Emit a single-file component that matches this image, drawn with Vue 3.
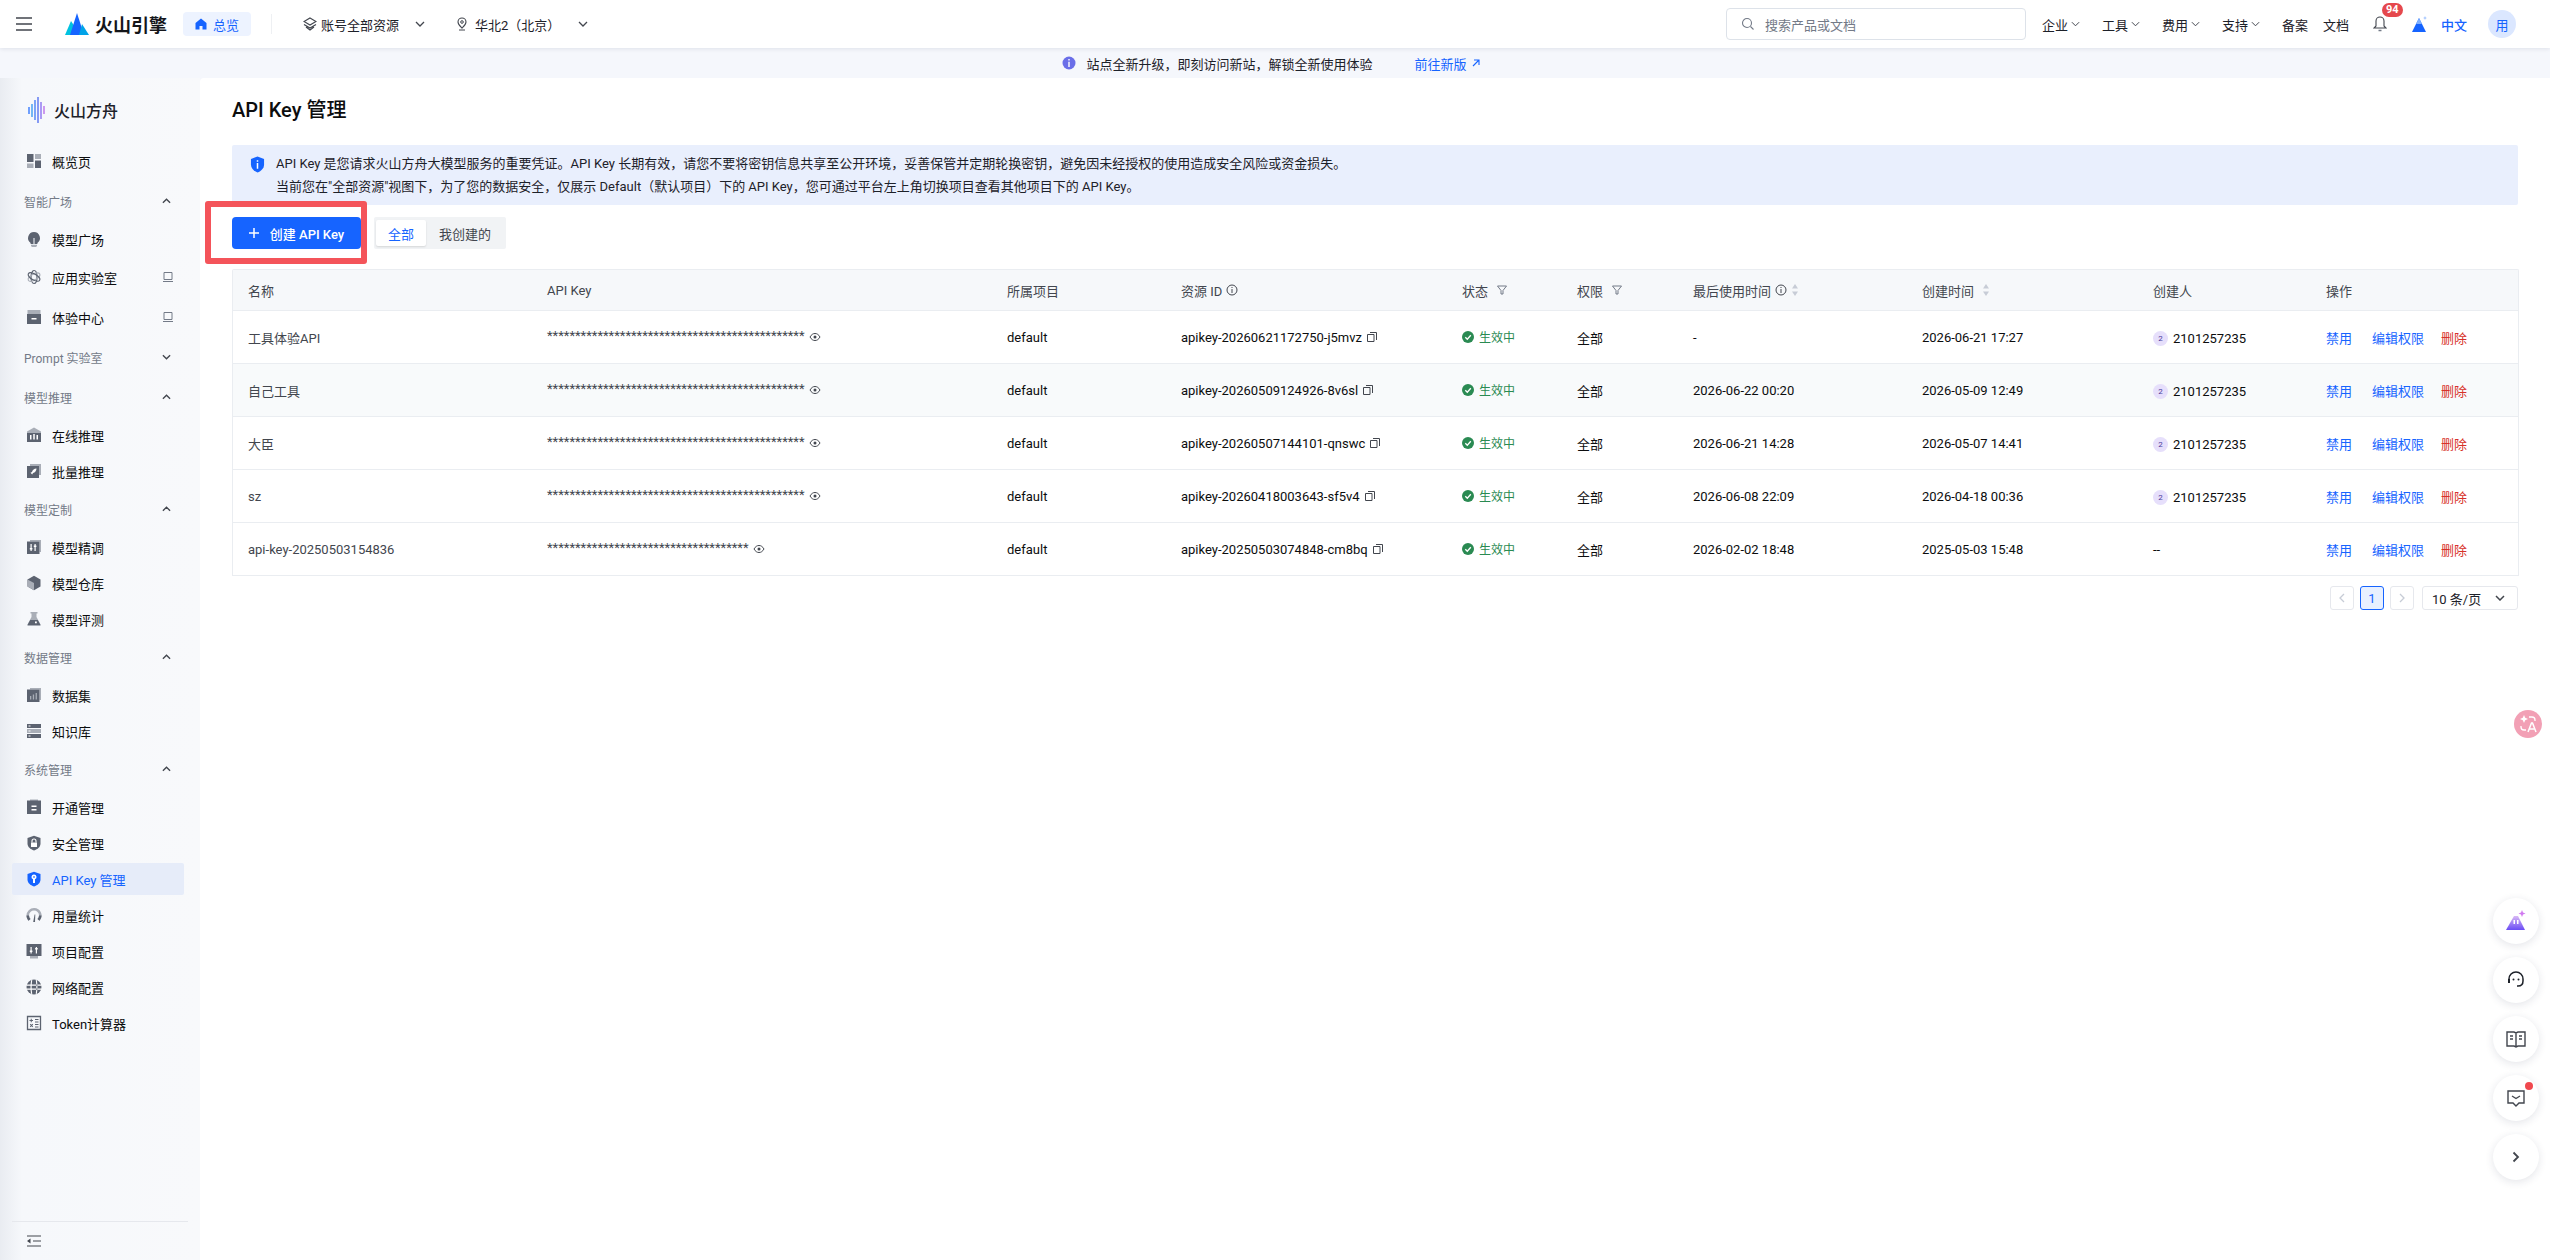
<script setup>
const D = "#5c6370";
const L = "#a9aeb7";
const W = "#ffffff";
const B = "#1664ff";

const icons = {
  overview: [
    { d: "M1 1h6.5v8H1z", fill: D },
    { d: "M9 1h6v5H9z", fill: L },
    { d: "M1 10.500h6.500V15H1z", fill: L },
    { d: "M9 7.500h6V15H9z", fill: D },
  ],
  bulb: [
    { d: "M8 1a6 6 0 0 0-3.400 10.900V13h6.800v-1.100A6 6 0 0 0 8 1z", fill: D },
    { d: "M5 13.800h6V15l-1 1H6l-1-1z", fill: L },
    { d: "M7 7h2v6H7z", fill: L },
  ],
  atom: [
    { d: "M8 1.500c1.700 0 3 2.900 3 6.500s-1.300 6.500-3 6.500S5 11.600 5 8s1.300-6.500 3-6.500z", fill: "none", stroke: D, "stroke-width": 1.2 },
    { d: "M8 1.500c1.700 0 3 2.900 3 6.500s-1.300 6.500-3 6.500S5 11.600 5 8s1.300-6.500 3-6.500z", fill: "none", stroke: L, "stroke-width": 1.2, transform: "rotate(60 8 8)" },
    { d: "M8 1.500c1.700 0 3 2.900 3 6.500s-1.300 6.500-3 6.500S5 11.600 5 8s1.300-6.500 3-6.500z", fill: "none", stroke: D, "stroke-width": 1.2, transform: "rotate(-60 8 8)" },
  ],
  box: [
    { d: "M1.500 1h13v4h-13z", fill: L },
    { d: "M1 5h14v10H1z", fill: D },
    { d: "M5.500 9h5v1.500h-5z", fill: W },
  ],
  bank: [
    { d: "M8 .500 1 4.500V15h14V4.500z", fill: L },
    { d: "M1 6h14v9H1z", fill: D },
    { d: "M4 8h1.500v4.500H4zM7.250 7h1.500v5.500h-1.500zM10.500 8H12v4.500h-1.500z", fill: W },
  ],
  rocket: [
    { d: "M4 1h11v11h-2V3H4z", fill: L },
    { d: "M1 3h12v12H1z", fill: D },
    { d: "M10.500 5.500c-2.200 0-4 1.500-4.500 3.500l-1.500.8 1.700 1.700.8-1.500c2-.5 3.500-2.300 3.500-4.500z", fill: W },
  ],
  tune: [
    { d: "M4 1h11v12h-1.500V2.500H4z", fill: L },
    { d: "M1 2.500h12.500V15H1z", fill: D },
    { d: "M4.500 5h1.200v7H4.500zM8.500 5h1.200v7H8.500z", fill: W },
    { d: "M3.800 9h2.600v1.500H3.800zM7.800 6.500h2.600V8H7.800z", fill: W },
  ],
  cube: [
    { d: "M8 .800 14.500 4.400v7.200L8 15.200 1.500 11.600V4.400z", fill: D },
    { d: "M1.500 4.400 8 8v7.200l-6.500-3.600z", fill: L },
  ],
  flask: [
    { d: "M4.500 1h7v1.500h-1V6l4 7.500V15h-13v-1.500l4-7.500V2.500h-1z", fill: L },
    { d: "M4.200 9h7.600l2.700 5H1.500z", fill: D },
    { d: "M9 10.500h1.800v1.800H9z", fill: W },
  ],
  dataset: [
    { d: "M4 1h11v12h-1.500V2.500H4z", fill: L },
    { d: "M1 2.500h12.500V15H1z", fill: D },
    { d: "M4 9h1.300v3.500H4zM6.800 7.500h1.300v5H6.800zM9.600 6h1.300v6.500H9.600z", fill: L },
  ],
  server: [
    { d: "M1 1h14v4H1z", fill: D },
    { d: "M1 6h14v4H1z", fill: L },
    { d: "M1 11h14v4H1z", fill: D },
    { d: "M2.500 2.500h2v1h-2zM2.500 7.500h2v1h-2zM2.500 12.500h2v1h-2z", fill: W },
  ],
  clip: [
    { d: "M4 .500h8V2H4z", fill: L },
    { d: "M1 1.500h14V15H1z", fill: D },
    { d: "M5.500 6.500h5V8h-5zM5.500 10h5v1.500h-5z", fill: W },
  ],
  shieldLock: [
    { d: "M8 .800 14.500 3v5.500c0 3.400-2.800 5.800-6.500 6.900-3.700-1.100-6.500-3.500-6.500-6.900V3z", fill: D },
    { d: "M5 7.500h6V12H5z", fill: W },
    { d: "M6 7.500V6a2 2 0 0 1 4 0v1.500", fill: "none", stroke: W, "stroke-width": 1.1 },
  ],
  shieldKey: [
    { d: "M8 .800 14.500 3v5.500c0 3.400-2.800 5.800-6.500 6.900-3.700-1.100-6.500-3.500-6.500-6.900V3z", fill: B },
    { d: "M8 3.500a2.500 2.500 0 0 1 1 4.800V12H7V8.300a2.500 2.500 0 0 1 1-4.800z", fill: W },
    { d: "M7.300 5.300h1.400v1.400H7.300z", fill: B },
  ],
  gauge: [
    { d: "M8 1a7.500 7.500 0 0 0-7.500 7.500c0 2 .8 3.900 2 5.200l2-1.700A5 5 0 0 1 3 8.500a5 5 0 0 1 10 0c0 1.300-.5 2.500-1.500 3.500l2 1.700a7.500 7.500 0 0 0-5.500-12.700z", fill: L },
    { d: "M.500 8.500c0 2 .8 3.900 2 5.200l2-1.700A5 5 0 0 1 3 8.500zM15.500 8.500c0 2-.8 3.900-2 5.200l-2-1.700A5 5 0 0 0 13 8.500z", fill: D },
    { d: "M7.200 15 8.600 7.500h.7L9 15z", fill: D },
  ],
  monitor: [
    { d: "M4 13h8v2.500H4z", fill: L },
    { d: "M.500 1h15v12H.500z", fill: D },
    { d: "M4.500 4h1.200v6.500H4.500zM9.800 4H11v6.500H9.800zM3.800 7.500h2.600V9H3.800zM9.100 5h2.600v1.500H9.100z", fill: W },
  ],
  globe: [
    { d: "M8 .500a7.500 7.500 0 1 0 0 15 7.500 7.500 0 0 0 0-15z", fill: D },
    { d: "M.500 5.500h15v1.200H.500zM.500 9.500h15v1.200H.500zM5.200 1 6.300 1.300C5.500 4.500 5.500 11.500 6.300 14.700L5.200 15C4.300 11.500 4.300 4.500 5.200 1zM10.800 1 9.700 1.300c.8 3.200.8 10.200 0 13.400l1.100.3c.9-3.500.9-10.500 0-14z", fill: W },
  ],
  calc: [
    { d: "M1.500 1.500h13v13h-13z", fill: "none", stroke: D, "stroke-width": 1.300 },
    { d: "M3.500 5h3.500v1H3.500zM4.750 3.750h1v3.500h-1zM9 4h3.500v1H9zM9 6.500h3.500v1H9zM9 9h3.500v1H9zM9 11.500h3.500v1H9z", fill: D },
    { d: "M3.800 9.500l.7-.7 2.700 2.700-.7.700zM3.800 11.500l2.700-2.700.7.700-2.700 2.700z", fill: D },
  ],
};

const nav = [
  { label: "概览页", icon: "overview", tall: true },
  { group: "智能广场", open: true },
  { label: "模型广场", icon: "bulb" },
  { label: "应用实验室", icon: "atom", tall: true, laptop: true },
  { label: "体验中心", icon: "box", tall: true, laptop: true },
  { group: "Prompt 实验室", open: false },
  { group: "模型推理", open: true },
  { label: "在线推理", icon: "bank" },
  { label: "批量推理", icon: "rocket" },
  { group: "模型定制", open: true },
  { label: "模型精调", icon: "tune" },
  { label: "模型仓库", icon: "cube" },
  { label: "模型评测", icon: "flask" },
  { group: "数据管理", open: true },
  { label: "数据集", icon: "dataset" },
  { label: "知识库", icon: "server" },
  { group: "系统管理", open: true },
  { label: "开通管理", icon: "clip" },
  { label: "安全管理", icon: "shieldLock" },
  { label: "API Key 管理", icon: "shieldKey", active: true },
  { label: "用量统计", icon: "gauge" },
  { label: "项目配置", icon: "monitor" },
  { label: "网络配置", icon: "globe" },
  { label: "Token计算器", icon: "calc" },
];

const topMenus = ["企业", "工具", "费用", "支持"];

const longKey = "*".repeat(46);
const shortKey = "*".repeat(36);

const rows = [
  { name: "工具体验API", key: longKey, id: "apikey-20260621172750-j5mvz", last: "-", created: "2026-06-21 17:27", user: "2101257235" },
  { name: "自己工具", key: longKey, id: "apikey-20260509124926-8v6sl", last: "2026-06-22 00:20", created: "2026-05-09 12:49", user: "2101257235", tint: true },
  { name: "大臣", key: longKey, id: "apikey-20260507144101-qnswc", last: "2026-06-21 14:28", created: "2026-05-07 14:41", user: "2101257235" },
  { name: "sz", key: longKey, id: "apikey-20260418003643-sf5v4", last: "2026-06-08 22:09", created: "2026-04-18 00:36", user: "2101257235" },
  { name: "api-key-20250503154836", key: shortKey, id: "apikey-20250503074848-cm8bq", last: "2026-02-02 18:48", created: "2025-05-03 15:48", user: "" },
];
</script>

<template>
  <div class="page">
    <header class="topbar">
      <svg class="burger" viewBox="0 0 16 14" width="16" height="14">
        <path d="M0 1h16M0 7h16M0 13h16" stroke="#42464e" stroke-width="1.500" fill="none" />
      </svg>
      <div class="brand">
        <svg viewBox="0 0 24 22" width="24" height="22">
          <path d="M0 22 6 8l4 6 2 8z" fill="#00c2e0" />
          <path d="M5 22 12 0l7 22z" fill="#1664ff" />
          <path d="M14 22l3-11 7 11z" fill="#00a3e8" />
        </svg>
        <span class="brand-name">火山引擎</span>
      </div>
      <div class="home-pill">
        <svg viewBox="0 0 12 12" width="12" height="12">
          <path d="M6 .500 11.500 5v6.500H7.500V8h-3v3.500H.500V5z" fill="#1664ff" />
        </svg>
        <span>总览</span>
      </div>
      <span class="top-divider"></span>
      <div class="scope scope-account">
        <svg viewBox="0 0 14 14" width="14" height="14">
          <path d="M7 1 13 4.500 7 8 1 4.500z" fill="none" stroke="#42464e" stroke-width="1.200" />
          <path d="M1 7.500 7 11l6-3.500M3 10l4 3 4-3" fill="none" stroke="#42464e" stroke-width="1.200" />
        </svg>
        <span>账号全部资源</span>
        <svg class="chev-wide" viewBox="0 0 10 6" width="10" height="6"><path d="M1 1l4 4 4-4" fill="none" stroke="#42464e" stroke-width="1.300" /></svg>
      </div>
      <div class="scope scope-region">
        <svg viewBox="0 0 10 14" width="10" height="14">
          <path d="M5 1a4 4 0 0 1 4 4c0 2.500-2.500 4.500-4 6-1.500-1.500-4-3.500-4-6a4 4 0 0 1 4-4z" fill="none" stroke="#42464e" stroke-width="1.100" />
          <circle cx="5" cy="5" r="1.300" fill="none" stroke="#42464e" />
          <path d="M2 13h6" stroke="#42464e" />
        </svg>
        <span>华北2（北京）</span>
        <svg class="chev-wide" viewBox="0 0 10 6" width="10" height="6"><path d="M1 1l4 4 4-4" fill="none" stroke="#42464e" stroke-width="1.300" /></svg>
      </div>

      <div class="top-right">
        <div class="search">
          <svg viewBox="0 0 14 14" width="14" height="14">
            <circle cx="6" cy="6" r="4.500" fill="none" stroke="#737a87" stroke-width="1.100" />
            <path d="M9.500 9.500l3 3" stroke="#737a87" stroke-width="1.100" />
          </svg>
          <span>搜索产品或文档</span>
        </div>
        <div v-for="m in topMenus" :key="m" class="top-menu">
          <span>{{ m }}</span>
          <svg viewBox="0 0 10 6" width="9" height="6"><path d="M1 1l4 4 4-4" fill="none" stroke="#42464e" stroke-width="1.100" /></svg>
        </div>
        <span class="top-plain">备案</span>
        <span class="top-plain doc">文档</span>
        <div class="bell">
          <svg viewBox="0 0 14 16" width="14" height="16">
            <path d="M7 1a4 4 0 0 1 4 4v5l2 2H1l2-2V5a4 4 0 0 1 4-4z" fill="none" stroke="#42464e" stroke-width="1.100" />
            <path d="M5.500 14.500h3" stroke="#737a87" stroke-width="1.500" />
          </svg>
          <span class="badge">94</span>
        </div>
        <svg class="peak" viewBox="0 0 18 18" width="18" height="18">
          <path d="M1 17 8 3l7 14z" fill="#1664ff" />
          <path d="M8 3l3 6H5z" fill="#7fb0ff" />
          <path d="M14 1l.6 1.400L16 3l-1.400.6L14 5l-.6-1.400L12 3l1.400-.6z" fill="#9cc0ff" />
        </svg>
        <span class="lang">中文</span>
        <span class="avatar">用</span>
      </div>
    </header>

    <div class="banner">
      <svg viewBox="0 0 14 14" width="14" height="14">
        <circle cx="7" cy="7" r="6.500" fill="#6a6ee8" />
        <path d="M6.300 3h1.400v1.400H6.300zM6.300 5.800h1.400V11H6.300z" fill="#fff" />
      </svg>
      <span class="banner-text">站点全新升级，即刻访问新站，解锁全新使用体验</span>
      <span class="banner-link">前往新版</span>
      <svg viewBox="0 0 10 10" width="10" height="10">
        <path d="M2 8l6-6M3 2h5v5" fill="none" stroke="#1664ff" stroke-width="1.100" />
      </svg>
    </div>

    <div class="body">
      <aside class="sidebar">
        <div class="ark">
          <svg viewBox="0 0 18 26" width="18" height="26">
            <path d="M1 10v7" stroke="#1664ff" stroke-width="1.200" />
            <path d="M4 7v13" stroke="#1c8cf0" stroke-width="1.200" />
            <path d="M7 3v20" stroke="#2a6cf5" stroke-width="1.200" />
            <path d="M10 0v26" stroke="#3b5cf0" stroke-width="1.200" />
            <path d="M13 5v17" stroke="#7a5cf0" stroke-width="1.200" />
            <path d="M16 9v8" stroke="#b05ae8" stroke-width="1.200" />
          </svg>
          <span>火山方舟</span>
        </div>

        <nav class="nav">
          <template v-for="n in nav" :key="n.label || n.group">
            <div v-if="n.group" class="nav-group">
              <span>{{ n.group }}</span>
              <svg viewBox="0 0 10 6" width="9" height="6">
                <path :d="n.open ? 'M1 5l4-4 4 4' : 'M1 1l4 4 4-4'" fill="none" stroke="#42464e" stroke-width="1.500" />
              </svg>
            </div>
            <div v-else class="nav-item" :class="{ tall: n.tall, active: n.active }">
              <svg viewBox="0 0 16 16" width="16" height="16">
                <path v-for="(p, i) in icons[n.icon]" :key="i" v-bind="p" />
              </svg>
              <span class="nav-label">{{ n.label }}</span>
              <svg v-if="n.laptop" class="laptop" viewBox="0 0 12 12" width="12" height="12">
                <path d="M2 1.500h8v7H2zM1 10.500h10" fill="none" stroke="#737a87" stroke-width="1" />
              </svg>
            </div>
          </template>
        </nav>

        <div class="side-foot">
          <svg viewBox="0 0 14 12" width="14" height="12">
            <path d="M0 1h14M6 6h8M0 11h14" stroke="#42464e" stroke-width="1.200" />
            <path d="M0 6l3.500-2.500v5z" fill="#42464e" />
          </svg>
        </div>
      </aside>

      <main class="content">
        <h1 class="title">API Key 管理</h1>

        <div class="alert">
          <svg viewBox="0 0 16 18" width="15" height="17">
            <path d="M8 .500 15 3v6c0 4-3 7-7 8.500C4 16 1 13 1 9V3z" fill="#1664ff" />
            <path d="M7.200 4.500h1.600v1.600H7.200zM7.200 7.500h1.600v6H7.200z" fill="#fff" />
          </svg>
          <div class="alert-text">
            <p>API Key 是您请求火山方舟大模型服务的重要凭证。API Key 长期有效，请您不要将密钥信息共享至公开环境，妥善保管并定期轮换密钥，避免因未经授权的使用造成安全风险或资金损失。</p>
            <p>当前您在"全部资源"视图下，为了您的数据安全，仅展示 Default（默认项目）下的 API Key，您可通过平台左上角切换项目查看其他项目下的 API Key。</p>
          </div>
        </div>

        <div class="tools">
          <div class="create-wrap">
            <button class="create">
              <svg viewBox="0 0 10 10" width="10" height="10"><path d="M5 0v10M0 5h10" stroke="#fff" stroke-width="1.500" /></svg>
              <span>创建 API Key</span>
            </button>
            <span class="mark"></span>
          </div>
          <div class="tabs">
            <span class="tab on">全部</span>
            <span class="tab">我创建的</span>
          </div>
        </div>

        <table class="grid">
          <colgroup>
            <col class="c-name" /><col class="c-key" /><col class="c-proj" /><col class="c-id" /><col class="c-state" />
            <col class="c-perm" /><col class="c-last" /><col class="c-made" /><col class="c-user" /><col class="c-op" />
          </colgroup>
          <thead>
            <tr>
              <th>名称</th>
              <th>API Key</th>
              <th>所属项目</th>
              <th>
                <span class="cell">资源 ID
                  <svg viewBox="0 0 12 12" width="12" height="12"><circle cx="6" cy="6" r="5" fill="none" stroke="#42464e" /><path d="M5.500 3h1v1h-1zM5.500 5h1v4h-1z" fill="#42464e" /></svg>
                </span>
              </th>
              <th>
                <span class="cell wide">状态
                  <svg viewBox="0 0 12 12" width="12" height="12"><path d="M1.500 2h9L7 6.500V10H5V6.500z" fill="none" stroke="#737a87" /></svg>
                </span>
              </th>
              <th>
                <span class="cell wide">权限
                  <svg viewBox="0 0 12 12" width="12" height="12"><path d="M1.500 2h9L7 6.500V10H5V6.500z" fill="none" stroke="#737a87" /></svg>
                </span>
              </th>
              <th>
                <span class="cell">最后使用时间
                  <svg viewBox="0 0 12 12" width="12" height="12"><circle cx="6" cy="6" r="5" fill="none" stroke="#42464e" /><path d="M5.500 3h1v1h-1zM5.500 5h1v4h-1z" fill="#42464e" /></svg>
                  <svg viewBox="0 0 8 14" width="8" height="14"><path d="M4 1 7 5.500H1zM4 13 1 8.500h6z" fill="#c7ccd6" /></svg>
                </span>
              </th>
              <th>
                <span class="cell wide">创建时间
                  <svg viewBox="0 0 8 14" width="8" height="14"><path d="M4 1 7 5.500H1zM4 13 1 8.500h6z" fill="#c7ccd6" /></svg>
                </span>
              </th>
              <th>创建人</th>
              <th>操作</th>
            </tr>
          </thead>
          <tbody>
            <tr v-for="r in rows" :key="r.id" :class="{ tint: r.tint }">
              <td class="muted">{{ r.name }}</td>
              <td>
                <span class="cell">
                  <span class="stars">{{ r.key }}</span>
                  <svg viewBox="0 0 12 12" width="12" height="12">
                    <path d="M1 6c1.500-2.500 3-3.500 5-3.500S9.500 3.500 11 6c-1.500 2.500-3 3.500-5 3.500S2.500 8.500 1 6z" fill="none" stroke="#42464e" />
                    <circle cx="6" cy="6" r="1.500" fill="#42464e" />
                  </svg>
                </span>
              </td>
              <td>default</td>
              <td>
                <span class="cell">{{ r.id }}
                  <svg viewBox="0 0 12 12" width="12" height="12">
                    <path d="M4 1.500h6.500V9" fill="none" stroke="#42464e" />
                    <path d="M1.500 3.500h6.500v7H1.500z" fill="none" stroke="#42464e" />
                  </svg>
                </span>
              </td>
              <td>
                <span class="state">
                  <svg viewBox="0 0 12 12" width="12" height="12">
                    <circle cx="6" cy="6" r="6" fill="#2a8a52" />
                    <path d="M3.300 6.200 5.300 8.200 8.800 4.300" fill="none" stroke="#fff" stroke-width="1.300" />
                  </svg>
                  生效中
                </span>
              </td>
              <td>全部</td>
              <td>{{ r.last }}</td>
              <td>{{ r.created }}</td>
              <td>
                <span v-if="r.user" class="cell"><span class="who">2</span>{{ r.user }}</span>
                <span v-else>--</span>
              </td>
              <td>
                <span class="ops">
                  <a>禁用</a>
                  <a>编辑权限</a>
                  <a class="danger">删除</a>
                </span>
              </td>
            </tr>
          </tbody>
        </table>

        <div class="pager">
          <span class="pg off">
            <svg viewBox="0 0 6 10" width="6" height="10"><path d="M5 1 1 5l4 4" fill="none" stroke="#c7ccd6" stroke-width="1.300" /></svg>
          </span>
          <span class="pg cur">1</span>
          <span class="pg off">
            <svg viewBox="0 0 6 10" width="6" height="10"><path d="M1 1l4 4-4 4" fill="none" stroke="#c7ccd6" stroke-width="1.300" /></svg>
          </span>
          <span class="size">
            10 条/页
            <svg viewBox="0 0 10 6" width="10" height="6"><path d="M1 1l4 4 4-4" fill="none" stroke="#42464e" stroke-width="1.500" /></svg>
          </span>
        </div>
      </main>
    </div>

    <div class="translate">
      <svg viewBox="0 0 20 20" width="20" height="20">
        <path d="M6 1l1.200 2.800L10 5 7.200 6.200 6 9 4.800 6.200 2 5l2.800-1.200z" fill="#fff" />
        <path d="M11 3h3a3 3 0 0 1 3 3v1M3 12v1a3 3 0 0 0 3 3h2" fill="none" stroke="#fff" stroke-width="1.300" />
        <path d="M10 18l3.500-9h1L18 18M11.300 15h5.400" fill="none" stroke="#fff" stroke-width="1.500" />
      </svg>
    </div>

    <div class="floats">
      <span class="fab">
        <svg viewBox="0 0 24 24" width="24" height="24">
          <defs>
            <linearGradient id="peakFill" x1="0" y1="0" x2="0" y2="1">
              <stop offset="0" stop-color="#d9b8f5" />
              <stop offset="1" stop-color="#6a4cf5" />
            </linearGradient>
          </defs>
          <path d="M2 21 10 7h4l7 14z" fill="url(#peakFill)" />
          <path d="M18 1l1 2.500L21.500 4.500 19 5.500 18 8l-1-2.500L14.500 4.500 17 3.500z" fill="#d07af0" />
          <path d="M9.500 11h1.500v4H9.500zM13 11h1.500v4H13z" fill="#fff" />
        </svg>
      </span>
      <span class="fab">
        <svg viewBox="0 0 20 20" width="20" height="20">
          <path d="M3 11V9a7 7 0 0 1 14 0v2c0 3-2 5-5 5h-1" fill="none" stroke="#1d2129" stroke-width="1.500" />
          <path d="M2 9h2v4H2z" fill="#1d2129" />
          <circle cx="7.500" cy="9.500" r="1" fill="#1d2129" />
          <circle cx="12.500" cy="9.500" r="1" fill="#1d2129" />
        </svg>
      </span>
      <span class="fab">
        <svg viewBox="0 0 20 20" width="20" height="20">
          <path d="M1 3h7l2 1 2-1h7v14h-7l-2 1-2-1H1zM10 4v14" fill="none" stroke="#42464e" stroke-width="1.400" />
          <path d="M4 7h3M4 10h3M13 7h3M13 10h3" stroke="#42464e" stroke-width="1.400" />
        </svg>
      </span>
      <span class="fab dot">
        <svg viewBox="0 0 20 20" width="20" height="20">
          <path d="M2 3h16v12h-5l-3 3-3-3H2z" fill="none" stroke="#42464e" stroke-width="1.400" />
          <path d="M6 8l4 2.500L14 8" fill="none" stroke="#42464e" stroke-width="1.400" />
        </svg>
      </span>
      <span class="fab">
        <svg viewBox="0 0 8 12" width="8" height="12"><path d="M1.500 1.500 6 6l-4.500 4.500" fill="none" stroke="#42464e" stroke-width="1.800" /></svg>
      </span>
    </div>
  </div>
</template>

<style>
html,
body {
  margin: 0;
  background: #fff;
}
</style>

<style scoped>
.page {
  position: relative;
  display: flex;
  flex-direction: column;
  height: 1260px;
  overflow: hidden;
  background: #f5f7fc;
  color: #0c0d0e;
  font-family: Roboto, "Noto Sans CJK SC", sans-serif;
  font-size: 13px;
}

/* 顶部导航 */
.topbar {
  position: relative;
  z-index: 2;
  display: flex;
  align-items: center;
  flex: 0 0 48px;
  padding-left: 16px;
  background: #fff;
  box-shadow: 0 1px 4px rgba(30, 40, 70, 0.1);
}
.brand {
  display: flex;
  align-items: center;
  gap: 6px;
  margin-left: 33px;
}
.brand-name {
  font-size: 18px;
  font-weight: 700;
  color: #14161a;
}
.home-pill {
  display: flex;
  align-items: center;
  gap: 6px;
  height: 24px;
  margin-left: 16px;
  padding: 0 12px;
  border-radius: 4px;
  background: #edf3ff;
  color: #1664ff;
}
.top-divider {
  width: 1px;
  height: 20px;
  margin-left: 20px;
  background: #eef0f3;
}
.scope {
  display: flex;
  align-items: center;
  gap: 4px;
  color: #1d2129;
}
.scope-account {
  margin-left: 31px;
}
.scope-region {
  margin-left: 32px;
}
.scope-region span {
  margin-left: 4px;
}
.chev-wide {
  margin-left: 12px;
}
.scope-region .chev-wide {
  margin-left: 14px;
}
.top-right {
  display: flex;
  align-items: center;
  margin-left: auto;
  padding-right: 34px;
}
.search {
  display: flex;
  align-items: center;
  gap: 10px;
  box-sizing: border-box;
  width: 300px;
  height: 32px;
  margin-right: 16px;
  padding-left: 14px;
  border: 1px solid #dde2e9;
  border-radius: 4px;
  color: #737a87;
}
.top-menu {
  display: flex;
  align-items: center;
  gap: 3px;
  width: 60px;
  color: #1d2129;
}
.top-plain {
  width: 41px;
  color: #1d2129;
}
.doc {
  width: 50px;
}
.bell {
  position: relative;
  display: flex;
  width: 38px;
  padding-left: 0;
}
.badge {
  position: absolute;
  top: -13px;
  left: 9px;
  padding: 0 4px;
  border-radius: 8px;
  background: #e5484d;
  color: #fff;
  font-size: 11px;
  font-weight: 700;
  line-height: 14px;
}
.peak {
  margin-left: 0;
}
.lang {
  margin-left: 12px;
  color: #1664ff;
  font-weight: 500;
}
.avatar {
  display: flex;
  align-items: center;
  justify-content: center;
  width: 28px;
  height: 28px;
  margin-left: 21px;
  border-radius: 50%;
  background: #dbe7ff;
  color: #1664ff;
}

/* 公告 */
.banner {
  display: flex;
  align-items: center;
  justify-content: center;
  gap: 4px;
  flex: 0 0 30px;
  padding-right: 7px;
  font-size: 13px;
}
.banner-text {
  margin-left: 6px;
  color: #1d2129;
}
.banner-link {
  margin-left: 38px;
  color: #1664ff;
}

.body {
  display: flex;
  flex: 1;
  min-height: 0;
}

/* 侧边栏 */
.sidebar {
  display: flex;
  flex-direction: column;
  flex: 0 0 200px;
  background: linear-gradient(90deg, #e9ecf1 0, #f6f8fb 22px, #f8f9fb 100%);
}
.ark {
  display: flex;
  align-items: center;
  gap: 8px;
  flex: 0 0 63px;
  padding-left: 28px;
  box-sizing: border-box;
  font-size: 16px;
  font-weight: 500;
  color: #1d2129;
}
.nav {
  display: flex;
  flex-direction: column;
}
.nav-group {
  display: flex;
  align-items: center;
  justify-content: space-between;
  height: 40px;
  padding: 0 29px 0 24px;
  font-size: 12px;
  color: #737a87;
}
.nav-item {
  display: flex;
  align-items: center;
  gap: 10px;
  height: 32px;
  margin: 2px 16px 2px 12px;
  padding-left: 14px;
  padding-right: 10px;
  border-radius: 2px;
  color: #0c0d0e;
}
.nav-item.tall {
  margin-top: 4px;
  margin-bottom: 4px;
}
.nav-item.active {
  background: #e6ecf9;
  color: #1664ff;
}
.nav-label {
  flex: 1;
}
.side-foot {
  display: flex;
  align-items: center;
  height: 38px;
  margin: auto 12px 0;
  padding-left: 15px;
  border-top: 1px solid #e6e8ed;
}

/* 内容区 */
.content {
  flex: 1;
  min-width: 0;
  padding: 20px 32px 0;
  background: #fff;
  border-top-left-radius: 4px;
}
.title {
  margin: 0;
  font-size: 20px;
  font-weight: 500;
  line-height: 24px;
  color: #0c0d0e;
}
.alert {
  display: flex;
  gap: 11px;
  box-sizing: border-box;
  height: 60px;
  margin-top: 23px;
  padding: 7px 18px;
  border-radius: 2px;
  background: #e9effd;
}
.alert svg {
  margin-top: 4px;
}
.alert-text p {
  margin: 0;
  line-height: 23px;
  color: #1d2129;
}
.tools {
  display: flex;
  align-items: center;
  gap: 13px;
  margin-top: 12px;
}
.create-wrap {
  position: relative;
}
.create {
  display: flex;
  align-items: center;
  justify-content: center;
  gap: 11px;
  width: 129px;
  height: 32px;
  padding: 0;
  border: 0;
  border-radius: 4px;
  background: #1664ff;
  color: #fff;
  font: inherit;
  font-weight: 500;
}
.mark {
  position: absolute;
  inset: -16px -6px -15px -27px;
  border: 6px solid #f4545a;
  border-radius: 3px;
}
.tabs {
  display: flex;
  align-items: center;
  box-sizing: border-box;
  height: 32px;
  padding: 3px 2px;
  border-radius: 2px;
  background: #f1f3f5;
}
.tab {
  display: flex;
  align-items: center;
  justify-content: center;
  height: 26px;
  padding: 0 13px;
  color: #42464e;
}
.tab.on {
  width: 50px;
  padding: 0;
  border-radius: 2px;
  background: #fff;
  box-shadow: 0 1px 2px rgba(0, 0, 0, 0.12);
  color: #1664ff;
}

/* 表格 */
.grid {
  table-layout: fixed;
  width: 2285px;
  margin-top: 20px;
  border-collapse: separate;
  border-spacing: 0;
  border-top: 1px solid #eaedf1;
  border-left: 1px solid #eaedf1;
  border-right: 1px solid #eaedf1;
  border-radius: 2px 2px 0 0;
}
.c-name { width: 299px; }
.c-key { width: 460px; }
.c-proj { width: 174px; }
.c-id { width: 281px; }
.c-state { width: 115px; }
.c-perm { width: 116px; }
.c-last { width: 229px; }
.c-made { width: 231px; }
.c-user { width: 173px; }
.c-op { width: 207px; }
.grid th {
  box-sizing: border-box;
  height: 41px;
  padding: 0 0 0 15px;
  background: #f6f8fa;
  border-bottom: 1px solid #eaedf1;
  color: #42464e;
  font-weight: 400;
  text-align: left;
}
.grid td {
  box-sizing: border-box;
  height: 53px;
  padding: 0 0 0 15px;
  border-bottom: 1px solid #eaedf1;
  color: #0c0d0e;
  white-space: nowrap;
}
.grid td.muted {
  color: #42464e;
}
.grid tr.tint td {
  background: #f8fafb;
}
.cell {
  display: inline-flex;
  align-items: center;
  gap: 4px;
}
.cell.wide {
  gap: 8px;
}
.stars {
  position: relative;
  top: -2px;
  color: #42464e;
}
.state {
  display: inline-flex;
  align-items: center;
  gap: 5px;
  color: #2a8a52;
  font-size: 12px;
}
.who {
  display: inline-flex;
  align-items: center;
  justify-content: center;
  width: 15px;
  height: 15px;
  margin-right: 1px;
  border-radius: 50%;
  background: #e6dffb;
  color: #4a3a9a;
  font-size: 8px;
}
.ops {
  display: inline-flex;
  gap: 20px;
}
.ops a {
  color: #1664ff;
}
.ops a.danger {
  margin-left: -3px;
  color: #d7312a;
}

/* 分页 */
.pager {
  display: flex;
  align-items: center;
  justify-content: flex-end;
  gap: 6px;
  margin-top: 10px;
}
.pg {
  display: flex;
  align-items: center;
  justify-content: center;
  box-sizing: border-box;
  width: 24px;
  height: 24px;
  border: 1px solid #e6e8ed;
  border-radius: 3px;
}
.pg.cur {
  border-color: #1664ff;
  background: #e8f0ff;
  color: #1664ff;
}
.size {
  display: flex;
  align-items: center;
  justify-content: space-between;
  box-sizing: border-box;
  width: 96px;
  height: 24px;
  margin-left: 2px;
  padding: 0 12px 0 9px;
  border: 1px solid #e6e8ed;
  border-radius: 3px;
  color: #1d2129;
}

/* 悬浮 */
.translate {
  position: absolute;
  top: 710px;
  left: 2514px;
  display: flex;
  align-items: center;
  justify-content: center;
  width: 28px;
  height: 28px;
  border-radius: 50%;
  background: #f2a0b5;
}
.floats {
  position: absolute;
  top: 898px;
  left: 2493px;
  display: flex;
  flex-direction: column;
  gap: 13px;
}
.fab {
  position: relative;
  display: flex;
  align-items: center;
  justify-content: center;
  width: 46px;
  height: 46px;
  border-radius: 50%;
  background: #fff;
  box-shadow: 0 2px 8px rgba(30, 40, 70, 0.12);
}
.fab.dot::after {
  content: "";
  position: absolute;
  top: 7px;
  right: 6px;
  width: 8px;
  height: 8px;
  border-radius: 50%;
  background: #f0484e;
}
</style>
